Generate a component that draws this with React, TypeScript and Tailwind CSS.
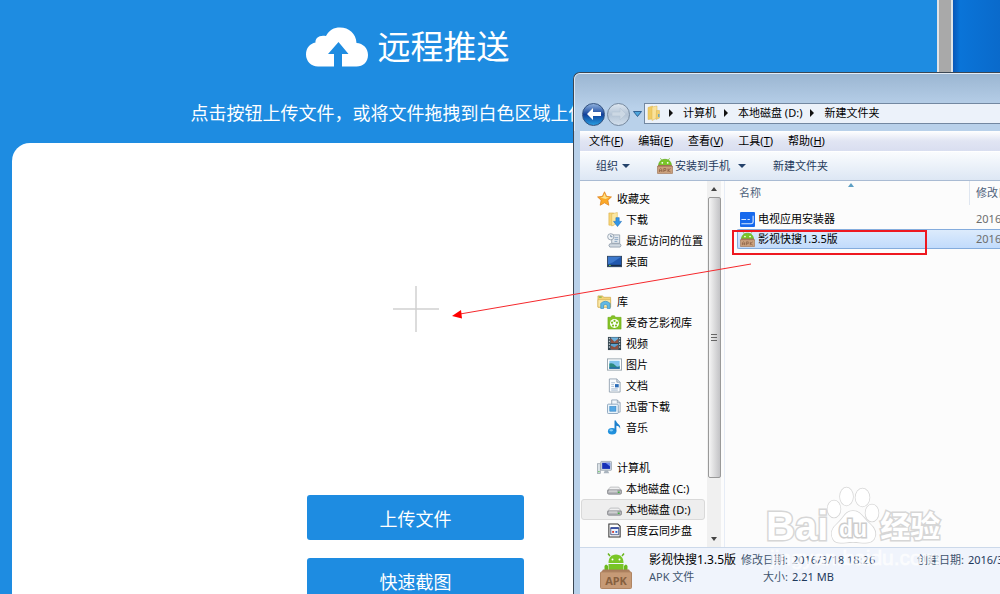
import React from "react";

interface NavEntry {
  id: string;
  label: string;
  icon: React.ReactNode;
  selected?: boolean;
}

interface NavGroup extends NavEntry {
  children: NavEntry[];
}

/* ---------- icons ---------- */

const ApkLargeIcon: React.FC<{ className?: string }> = ({ className }) => (
  <svg viewBox="0 0 32 36" className={className}>
    <path d="M10 3l-2-2.500M22 3l2-2.500" stroke="#69b51e" strokeWidth="1.500" />
    <path d="M8.500 10C8.500 5 11 1.500 16 1.500S23.500 5 23.500 10z" fill="#7ac628" />
    <circle cx="12.500" cy="6.500" r="1" fill="#fff" />
    <circle cx="19.500" cy="6.500" r="1" fill="#fff" />
    <path d="M4.500 17v-4q1.500-3 3.500 0v4zM24 17v-4q2-3 3.500 0v4z" fill="#6ab81c" />
    <path d="M8.500 11h15v6h-15z" fill="#78c426" />
    <path d="M3 16.500h26l2.500 4H.5z" fill="#a87c5c" />
    <rect x=".5" y="19" width="31" height="16.500" rx="1" fill="#c69a76" stroke="#b08563" />
    <text x="16" y="31.500" textAnchor="middle" fontSize="11" fontWeight="bold" fill="#86603f" fontFamily="Noto Sans, sans-serif">
      APK
    </text>
  </svg>
);

const ApkIcon: React.FC<{ className?: string }> = ({ className }) => (
  <svg viewBox="0 0 16 16" className={className}>
    <path d="M4.500 1.800L3.500.4M11.500 1.800l1-1.400" stroke="#69b51e" strokeWidth=".9" />
    <path d="M1.500 8C1.500 4 4 1.300 8 1.300S14.500 4 14.500 8z" fill="#79c528" stroke="#5ba315" strokeWidth=".6" />
    <circle cx="5.300" cy="4.800" r=".9" fill="#fff" />
    <circle cx="10.700" cy="4.800" r=".9" fill="#fff" />
    <path d="M1.500 7h13L16 9H0z" fill="#9c7152" />
    <rect x=".4" y="8.200" width="15.200" height="7.400" rx=".6" fill="#cba17d" stroke="#a0775a" strokeWidth=".7" />
    <path d="M2.500 14v-2.500q1.200-2 2.400 0V14M2.500 12.700h2.400M6.800 14v-3.500h2v2h-2M11 10.500V14M13.600 10.500L11 12.300l2.600 1.700" stroke="#8a6145" strokeWidth=".8" fill="none" />
  </svg>
);

const StarIcon = () => (
  <svg viewBox="0 0 16 16" className="w-[15px] h-[15px]">
    <path d="M8 .8l2.200 4.900 5.200.6-3.800 3.600 1 5.300L8 12.600l-4.600 2.600 1-5.300L.6 6.300l5.200-.6z" fill="#fba928" stroke="#e0821c" strokeWidth=".8" />
    <path d="M8 2.500l1.500 4 3.500.5-4 1.500-5.500-1.500 3-.5z" fill="#fde28a" />
  </svg>
);

const DownloadFolderIcon = () => (
  <svg viewBox="0 0 16 16" className="w-[15px] h-[15px]">
    <path d="M2 1h5v13H2z" fill="#f6d477" stroke="#d9ad44" strokeWidth=".6" />
    <path d="M5 2l6-1.500V12l-6 3z" fill="#fbe7a1" stroke="#dcb552" strokeWidth=".6" />
    <path d="M9.500 6h3.500v4h2.500L11.200 15.500 7 10h2.500z" fill="#3296e8" stroke="#1a6dbb" strokeWidth=".6" />
  </svg>
);

const RecentIcon = () => (
  <svg viewBox="0 0 16 16" className="w-[15px] h-[15px]">
    <path d="M5 2h8.500v9H5z" fill="#e3e9ef" stroke="#8f9dab" strokeWidth=".9" />
    <path d="M3 11.500h11q2 1.500 0 3.500H3q-2-2 0-3.500z" fill="#d2dae2" stroke="#8f9dab" strokeWidth=".9" />
    <path d="M8 5h4M8 7h4M8 9h3" stroke="#7e9dbd" strokeWidth=".9" />
    <circle cx="4" cy="4" r="3.300" fill="#f0f4f7" stroke="#8f9dab" strokeWidth=".9" />
    <path d="M4 2v2h1.800" stroke="#51718f" strokeWidth=".8" fill="none" />
  </svg>
);

const DesktopIcon = () => (
  <svg viewBox="0 0 16 16" className="w-[15px] h-[15px]">
    <rect x=".5" y="2.500" width="15" height="11" fill="#1f57ae" stroke="#32465f" />
    <path d="M1 3h14L6 9 1 11z" fill="#3c78cc" />
    <path d="M1 11.500h14V13H1z" fill="#172d4a" />
    <path d="M2 12.200h2" stroke="#6fd04c" />
  </svg>
);

const LibraryIcon = () => (
  <svg viewBox="0 0 16 16" className="w-[15px] h-[15px]">
    <path d="M1 2h5l1 1.500h7.500V14H1z" fill="#f3d477" stroke="#cda544" strokeWidth=".7" />
    <path d="M1 6h13.500v8H1z" fill="#fbe9a9" stroke="#d4b04f" strokeWidth=".7" />
    <path d="M2 3.300h3" stroke="#58ad3c" />
    <path d="M4 15.500V10Q9 5.500 14 10v5.500h-3V12q-2-1.800-4 0v3.500z" fill="#62b9e6" stroke="#318bbd" strokeWidth=".7" />
  </svg>
);

const QiyiIcon = () => (
  <svg viewBox="0 0 16 16" className="w-[15px] h-[15px]">
    <path d="M1 2.500h3L5 .8h3l1 1.700h6V15H1z" fill="#85c327" stroke="#69a815" strokeWidth=".6" />
    <circle cx="8" cy="9" r="4.800" fill="#fff" />
    <g fill="#7dbb20">
      <circle cx="8" cy="6.300" r="1.200" />
      <circle cx="10.600" cy="8.200" r="1.200" />
      <circle cx="9.600" cy="11.200" r="1.200" />
      <circle cx="6.400" cy="11.200" r="1.200" />
      <circle cx="5.400" cy="8.200" r="1.200" />
    </g>
  </svg>
);

const VideoIcon = () => (
  <svg viewBox="0 0 16 16" className="w-[15px] h-[15px]">
    <rect x="1" y="1" width="14" height="14" fill="#34454f" />
    <path d="M4 1.500h8v6H4z" fill="#6cb2dd" />
    <path d="M4 8.500h8v6H4z" fill="#5ba2d1" />
    <path d="M4 2l4 4 4-3v4.500H4zM4 10l4 2 4-3v5.500H4z" fill="#8f5040" />
    <path d="M2.500 2v12M13.500 2v12" stroke="#e4ecf0" strokeDasharray="1.500 1.500" />
  </svg>
);

const PictureIcon = () => (
  <svg viewBox="0 0 16 16" className="w-[15px] h-[15px]">
    <rect x=".5" y="2" width="15" height="12" fill="#fff" stroke="#97a4ae" />
    <path d="M2.500 4h11v8.500h-11z" fill="#82c4ee" />
    <path d="M2.500 7q4-1 6.500 2t4.500 0v3.500h-11z" fill="#2c8a80" />
    <path d="M2.500 11h11v1.500h-11z" fill="#2769b0" />
  </svg>
);

const DocumentIcon = () => (
  <svg viewBox="0 0 16 16" className="w-[15px] h-[15px]">
    <path d="M2.500 1h8l3.500 3.500V15H2.500z" fill="#fafcfe" stroke="#8b9bab" strokeWidth=".9" />
    <path d="M10.500 1v3.500H14" fill="#d6e0ea" stroke="#8b9bab" strokeWidth=".9" />
    <path d="M4.500 5h4M4.500 7h3M4.500 9h3M4.500 11.500h7M4.500 13h7" stroke="#90a9c4" strokeWidth=".7" />
    <path d="M8.500 6.500h4v3.500h-4z" fill="#2c6db8" />
  </svg>
);

const XunleiIcon = () => (
  <svg viewBox="0 0 16 16" className="w-[15px] h-[15px]">
    <path d="M5 1h6l3 3v10H5z" fill="#f1f6fa" stroke="#8ea0b2" strokeWidth=".9" />
    <path d="M11 1v3h3" fill="none" stroke="#8ea0b2" strokeWidth=".9" />
    <rect x=".5" y="5.500" width="11.500" height="10" rx="1" fill="#eaf4fb" stroke="#809bb5" strokeWidth=".9" />
    <rect x="3" y="8" width="6.500" height="5" fill="#55a8e4" stroke="#2f7fc0" strokeWidth=".6" />
  </svg>
);

const MusicIcon = () => (
  <svg viewBox="0 0 16 16" className="w-[15px] h-[15px]">
    <ellipse cx="5.500" cy="12" rx="4.500" ry="3.500" fill="#2191dd" />
    <path d="M8 12V.5h1.500c.5 3.500 5.500 4 4.500 9-.7-2.500-2-3.200-4-3.500v6z" fill="#1c80cd" />
    <ellipse cx="4.500" cy="11" rx="2" ry="1.200" fill="#84cbf5" />
  </svg>
);

const ComputerIcon = () => (
  <svg viewBox="0 0 16 16" className="w-[15px] h-[15px]">
    <rect x="4" y="1.500" width="11.500" height="9.500" rx=".8" fill="#d3dae1" stroke="#8792a0" strokeWidth=".7" />
    <path d="M5.500 3h8.500v6.500H5.500z" fill="#1731b8" />
    <path d="M9 3h5v4z" fill="#6f8ceb" />
    <path d="M8.500 11h3l1.500 3H7z" fill="#aab4be" />
    <rect x=".5" y="4" width="3" height="10.500" fill="#dde3e8" stroke="#8a96a2" strokeWidth=".7" />
    <path d="M1.200 12.500h1.600" stroke="#49b93d" />
  </svg>
);

const DriveIcon = () => (
  <svg viewBox="0 0 16 16" className="w-[15px] h-[15px]">
    <path d="M3.500 6.500h9l3 3.500H.5z" fill="#f0f0f1" stroke="#a5a6aa" strokeWidth=".7" />
    <rect x=".5" y="9.500" width="15" height="4.500" rx="1.500" fill="#b5b6ba" stroke="#77787e" strokeWidth=".8" />
    <path d="M2 10.700h9" stroke="#e7e7e9" />
    <path d="M11.500 12h2" stroke="#38b138" strokeWidth="1.400" />
  </svg>
);

const CloudSyncIcon = () => (
  <svg viewBox="0 0 16 16" className="w-[15px] h-[15px]">
    <path d="M2 1h9.500L14 3.500V15H2z" fill="#fff" stroke="#333" strokeWidth="1.100" />
    <path d="M4 5h8.500v7.500H4z" fill="#edf2fa" stroke="#25356b" strokeWidth=".8" />
    <path d="M4 5.500h8.500" stroke="#243e9b" strokeWidth="1.500" />
    <path d="M5.500 8.500h2v2h-2z" fill="#d33d34" />
    <path d="M9 8.500h2v2H9z" fill="#2e66cb" />
  </svg>
);

const InstallerIcon = () => (
  <svg viewBox="0 0 16 16" className="w-[15px] h-[15px]">
    <rect x="0" y="0" width="16" height="16" rx="1" fill="#1769ed" />
    <path d="M1.500 8h5M8 8h2.500M1.500 12.500H12q2 0 2-2V4" stroke="#d9e9ff" strokeWidth="1.200" fill="none" />
  </svg>
);

const FolderIcon = () => (
  <svg viewBox="0 0 14 16" className="w-[14px] h-4">
    <path d="M1 2.500L5.500 1v13L1 14.500z" fill="#f0cb63" stroke="#dcb450" strokeWidth=".5" />
    <path d="M5 2l5-1v12l-5 2.500z" fill="#fae29a" stroke="#dcb450" strokeWidth=".5" />
    <path d="M9.500 5.500H12.500V13L9 14.500z" fill="#f1cf6f" stroke="#dcb450" strokeWidth=".5" />
    <path d="M11 9h1.500v3H11z" fill="#6da7c4" />
  </svg>
);

const CrumbArrow = () => (
  <svg viewBox="0 0 4 8" className="w-1 h-2 shrink-0">
    <path d="M0 0l4 4-4 4z" fill="#111" />
  </svg>
);

const DownArrow = () => (
  <svg viewBox="0 0 8 4" className="w-2 h-1 shrink-0">
    <path d="M0 0h8L4 4z" fill="#24426b" />
  </svg>
);

/* ---------- data ---------- */

const navGroups: NavGroup[] = [
  {
    id: "favorites",
    label: "收藏夹",
    icon: <StarIcon />,
    children: [
      { id: "downloads", label: "下载", icon: <DownloadFolderIcon /> },
      { id: "recent", label: "最近访问的位置", icon: <RecentIcon /> },
      { id: "desktop", label: "桌面", icon: <DesktopIcon /> }
    ]
  },
  {
    id: "libraries",
    label: "库",
    icon: <LibraryIcon />,
    children: [
      { id: "qiyi", label: "爱奇艺影视库", icon: <QiyiIcon /> },
      { id: "videos", label: "视频", icon: <VideoIcon /> },
      { id: "pictures", label: "图片", icon: <PictureIcon /> },
      { id: "documents", label: "文档", icon: <DocumentIcon /> },
      { id: "xunlei", label: "迅雷下载", icon: <XunleiIcon /> },
      { id: "music", label: "音乐", icon: <MusicIcon /> }
    ]
  },
  {
    id: "computer",
    label: "计算机",
    icon: <ComputerIcon />,
    children: [
      { id: "c", label: "本地磁盘 (C:)", icon: <DriveIcon /> },
      { id: "d", label: "本地磁盘 (D:)", icon: <DriveIcon />, selected: true },
      { id: "sync", label: "百度云同步盘", icon: <CloudSyncIcon /> }
    ]
  }
];

const menus = [
  { label: "文件", hotkey: "F" },
  { label: "编辑", hotkey: "E" },
  { label: "查看", hotkey: "V" },
  { label: "工具", hotkey: "T" },
  { label: "帮助", hotkey: "H" }
];

const crumbs = ["计算机", "本地磁盘 (D:)", "新建文件夹"];

/* ---------- web page ---------- */

const PushPage = () => (
  <main className="flex-1 min-w-0 bg-[#1e8ce1] text-white flex flex-col pl-3">

    <div className="flex-1 flex flex-col max-w-[807px]">

      <header className="flex flex-col items-center pt-[23px]">
        <div className="flex items-center gap-2.5 h-12 pr-4">
          <svg viewBox="0 0 62 40" className="w-[62px] h-10">
            <path
              d="M12 39.500C5 39.500 0 34 0 27.500 0 21 4 16.500 9.500 15.500 9 11 13.500 7.500 20 9 23 3 28 .5 34 .5c9 0 16 6 16.500 15.500C57 16.500 62 21 62 28c0 7-5 11.500-11.500 11.500H36V27h6.500L32.500 15 22 27h6v12.500z"
              fill="#fff"
            />
          </svg>
          <h1 className="text-[33px] leading-[48px]">远程推送</h1>
        </div>
        <p className="mt-7 mb-4 text-lg leading-7 whitespace-nowrap">
          点击按钮上传文件，或将文件拖拽到白色区域上传即可。
        </p>
      </header>

      <section className="flex-1 bg-white rounded-t-[18px] flex flex-col items-center pt-[143px]">
        <svg viewBox="0 0 46 46" className="w-[46px] h-[46px] shrink-0">
          <path d="M23 0v46" stroke="#dcdcdc" strokeWidth="2" />
          <path d="M0 23h46" stroke="#d0d0d0" strokeWidth="1.500" />
        </svg>
        <div className="mt-[163px] flex flex-col gap-[18px] text-lg">
          <button className="w-[217px] h-[45px] pt-0.5 bg-[#1e8ce1] rounded-[3px]">上传文件</button>
          <button className="w-[217px] h-[45px] pt-0.5 bg-[#1e8ce1] rounded-[3px]">快速截图</button>
        </div>
      </section>

    </div>

  </main>
);

/* ---------- explorer window ---------- */

const NavItem: React.FC<{ entry: NavEntry; child?: boolean }> = ({ entry, child }) => (
  <a
    href={`#${entry.id}`}
    className={`flex items-center h-[21px] ml-px mr-0.5 whitespace-nowrap border rounded-[3px] ${
      child ? "pl-[25px] gap-1" : "pl-[15px] gap-[5px]"
    } ${entry.selected ? "bg-[#eeeeee] border-[#d9d9d9]" : "border-transparent"}`}
  >
    {entry.icon}
    {entry.label}
  </a>
);

const NavPane = () => (
  <nav className="w-[127px] shrink-0 overflow-hidden pt-[7px] flex flex-col gap-[19px]">
    {navGroups.map(group => (
      <div key={group.id}>
        <NavItem entry={group} />
        {group.children.map(item => (
          <NavItem key={item.id} entry={item} child />
        ))}
      </div>
    ))}
  </nav>
);

const ScrollBar = () => (
  <div className="w-[14px] shrink-0 bg-[#f0f0f0] flex flex-col items-center">
    <div className="h-4 flex items-center">
      <svg viewBox="0 0 6 4" className="w-1.5 h-1"><path d="M0 4h6L3 0z" fill="#444" /></svg>
    </div>
    <div className="w-[13px] h-[281px] rounded-xs border border-[#999] bg-linear-to-r from-[#f5f5f5] to-[#c3c3c6] flex items-center justify-center">
      <svg viewBox="0 0 6 7" className="w-1.5 h-[7px]"><path d="M0 .5h6M0 3.500h6M0 6.500h6" stroke="#666" /></svg>
    </div>
    <div className="mt-auto h-4 flex items-center">
      <svg viewBox="0 0 6 4" className="w-1.5 h-1"><path d="M0 0h6L3 4z" fill="#444" /></svg>
    </div>
  </div>
);

const FileList = () => (
  <div className="relative flex-1 min-w-0 overflow-hidden border-l border-[#e6ecf6] ml-[3px] pl-3">
    <table className="w-[380px] table-fixed border-separate border-spacing-0 text-left">
      <thead>
        <tr className="h-6 text-[#4c607a]">
          <th className="w-[233px] pl-0.5 font-normal border-r border-[#dfe6f0]">名称</th>
          <th className="pl-1.5 font-normal">修改日期</th>
        </tr>
      </thead>
      <tbody>
        <tr className="h-6">
          <td className="pl-[3px] pt-1">
            <span className="flex items-center gap-[3px]"><InstallerIcon />电视应用安装器</span>
          </td>
          <td className="pl-1.5 pt-1 text-[#6d6d6d]">2016/3/18 18:25</td>
        </tr>
        <tr className="h-5">
          <td className="pl-0.5 border-y border-l border-[#84acdd] rounded-l-xs bg-linear-to-b from-[#dcebfc] to-[#c1dbfc]">
            <span className="flex items-center gap-[3px]"><ApkIcon className="w-[15px] h-[15px]" />影视快搜1.3.5版</span>
          </td>
          <td className="pl-1.5 border-y border-[#84acdd] bg-linear-to-b from-[#dcebfc] to-[#c1dbfc] text-[#6d6d6d]">2016/3/18 18:26</td>
        </tr>
      </tbody>
    </table>
    <svg viewBox="0 0 6 4" className="absolute top-0.5 left-[123px] w-1.5 h-1"><path d="M0 4h6L3 0z" fill="#5d9fc4" /></svg>
    {/* highlight frame around the apk */}
    <div className="absolute left-[7px] top-[49px] w-[195px] h-[25px] border-2 border-[#ee1820]" />
  </div>
);

const Explorer = () => (
  <div className="absolute left-[573px] top-[72px] right-0 bottom-0 flex flex-col border-t border-l border-[#3b4754] rounded-tl-[7px] overflow-hidden bg-[#b9d1ea] text-[11px] leading-4 text-black">

    <div className="pt-[23px] border-t border-l border-white/60 rounded-tl-[6px] bg-linear-to-b from-[#9bb6d2] to-[#b9d1ea] to-60%">
      <div className="h-[34px] pl-[7px] flex items-center">
        <button aria-label="后退" className="w-[23px] h-[23px] rounded-full border border-[#33527f] bg-linear-to-b from-[#8fb0dc] via-[#12409a] to-[#2a9de0] flex items-center justify-center">
          <svg viewBox="0 0 14 12" className="w-[14px] h-3"><path d="M0 6l6-6v4h8v4H6v4z" fill="#fff" /></svg>
        </button>
        <button aria-label="前进" className="ml-0.5 w-[23px] h-[23px] rounded-full border border-[#76899f] bg-linear-to-b from-[#dce6f0] via-[#b4c4d6] to-[#d2dfec] flex items-center justify-center">
          <svg viewBox="0 0 14 12" className="w-[14px] h-3"><path d="M14 6L8 0v4H0v4h8v4z" fill="#ccd8e4" stroke="#b2c2d3" strokeWidth=".5" /></svg>
        </button>
        <svg viewBox="0 0 9 6" className="ml-[3px] w-[9px] h-1.5"><path d="M.5.5h8l-4 5z" fill="#4da5dc" stroke="#1d4d80" strokeWidth=".8" /></svg>
        <div className="ml-0.5 mb-0.5 flex-1 min-w-0 h-[21px] flex items-center gap-2.5 pl-0.5 border-y border-l border-[#7388a1] bg-[#ecf2fa] whitespace-nowrap">
          <div className="-mr-0.5"><FolderIcon /></div>
          {crumbs.map(crumb => (
            <React.Fragment key={crumb}>
              <CrumbArrow />
              <a href="#path" className="-mr-0.5">{crumb}</a>
            </React.Fragment>
          ))}
        </div>
      </div>
    </div>

    <div className="flex-1 min-h-0 ml-1.5 flex flex-col bg-[#fcfcfc]">

      <div className="h-[21px] shrink-0 pl-[9px] flex items-center gap-[15px] border-b border-white bg-linear-to-b from-white via-[#e1e5f3] to-[#d9def0] whitespace-nowrap">
        {menus.map(menu => (
          <button key={menu.hotkey}>
            {menu.label}(<u>{menu.hotkey}</u>)
          </button>
        ))}
      </div>

      <div className="h-[29px] shrink-0 pl-4 flex items-center border-b border-[#a9bbd3] bg-linear-to-b from-[#fafcfe] to-[#dde7f4] text-[#1e395b] whitespace-nowrap">
        <button className="flex items-center gap-1">组织 <DownArrow /></button>
        <button className="ml-[27px] flex items-center gap-0.5"><ApkIcon className="w-4 h-4" />安装到手机</button>
        <button aria-label="更多" className="ml-2"><DownArrow /></button>
        <button className="ml-[27px]">新建文件夹</button>
      </div>

      <div className="flex-1 min-h-0 flex">
        <NavPane />
        <ScrollBar />
        <FileList />
      </div>

      <footer className="h-[47px] shrink-0 pl-5 flex border-t border-[#ccd9ea] bg-[#f0f4fc] text-[#3f546e] whitespace-nowrap">
        <ApkLargeIcon className="mt-1 w-8 h-[38px] shrink-0" />
        <div className="ml-[17px] pt-1">
          <div className="text-xs text-black">影视快搜1.3.5版</div>
          <div className="mt-px">APK 文件</div>
        </div>
        <dl className="ml-[5px] pt-1 grid grid-cols-[auto_125px] auto-rows-[16px] gap-x-1 gap-y-px content-start">
          <dt className="text-right">修改日期:</dt>
          <dd className="text-[#1e395b]">2016/3/18 18:26</dd>
          <dt className="text-right">大小:</dt>
          <dd className="text-[#1e395b]">2.21 MB</dd>
        </dl>
        <dl className="pt-1 flex gap-1">
          <dt>创建日期:</dt>
          <dd className="text-[#1e395b]">2016/3/18 18:26</dd>
        </dl>
      </footer>

    </div>

  </div>
);

const Watermark = () => (
  <div className="absolute left-[766px] top-[485px] pointer-events-none whitespace-nowrap font-bold text-white">
    <div className="h-[61px] flex items-end [-webkit-text-stroke:3px_#d6d6d6] [paint-order:stroke_fill]">
      <span className="font-['Liberation_Sans',sans-serif] text-[40px] leading-10">Bai</span>
      <svg viewBox="0 0 54 60" className="-ml-0.5 w-[54px] h-[60px] shrink-0">
        <g fill="#fff" stroke="#d6d6d6" strokeWidth="1.500">
          <ellipse cx="8" cy="23" rx="6.500" ry="8.500" />
          <ellipse cx="20.500" cy="10.500" rx="6.500" ry="9" />
          <ellipse cx="36.500" cy="11.500" rx="7" ry="9" />
          <ellipse cx="46" cy="27" rx="6.500" ry="8.500" />
          <path d="M27 25c8 0 10 7 16 12 6 5 8 11 5 16-4 6-12 3-21 3s-17 3-20-3c-3-6-1-11 5-16 6-5 7-12 15-12z" />
        </g>
        <text x="27" y="51" textAnchor="middle" fontSize="23" fontFamily="Liberation Sans, sans-serif" fill="#fff" stroke="#cdcdcd" strokeWidth="3">
          du
        </text>
      </svg>
      <span className="text-[30px] leading-10">经验</span>
    </div>
    <div className="font-['Liberation_Sans',sans-serif] font-normal text-[21px] leading-6 pl-1 text-white/70 [-webkit-text-stroke:1px_rgba(255,255,255,0.5)]">jingyan.baidu.com</div>
  </div>
);

const App: React.FC = () => {
  return (
    <div className="relative h-screen min-h-[400px] overflow-hidden flex font-['Noto_Sans','Noto_Sans_CJK_SC',sans-serif]">

      <PushPage />

      {/* browser scrollbar and the desktop behind it */}
      <div className="w-4 shrink-0 bg-[#a9a9a9] border-x-2 border-[#e2e4e6]" />
      <div className="w-[47px] shrink-0 bg-linear-to-r from-[#0a57b8] via-[#0a74d8] via-15% to-[#0a6acb]" />

      <Explorer />

      {/* drag direction */}
      <svg viewBox="0 0 300 56" className="absolute left-[452px] top-[263px] w-[300px] h-14 pointer-events-none">
        <path d="M299 1L8 51" stroke="#f5282c" strokeWidth="1" />
        <path d="M0 53l9-6 1 8.500z" fill="#f00" />
      </svg>

      <Watermark />

    </div>
  );
};

export default App;
